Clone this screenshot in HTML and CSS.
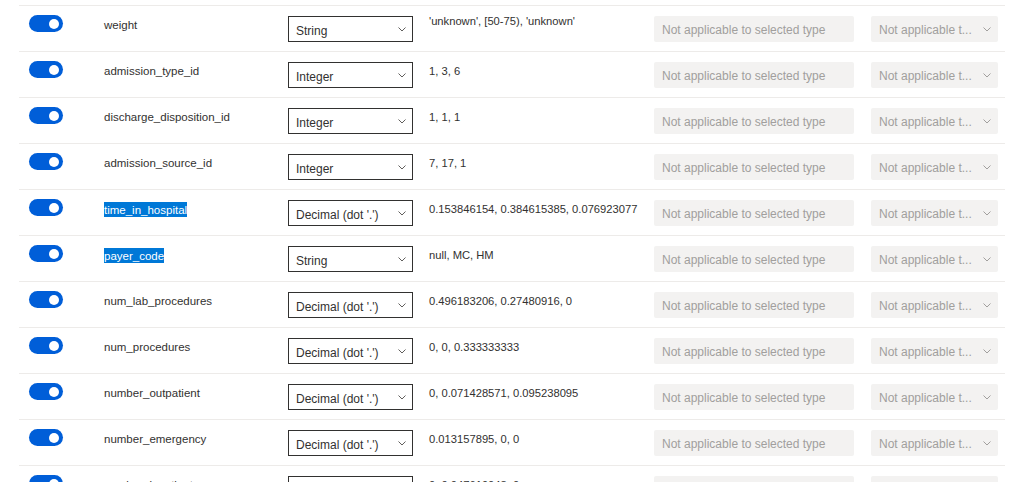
FILE: index.html
```html
<!DOCTYPE html>
<html lang="en">
<head>
<meta charset="utf-8">
<title>Column types</title>
<link rel="stylesheet" href="styles.css">
</head>
<body>
<div class="list">
  <div class="row">
    <div class="c-toggle"><span class="toggle"><span class="knob"></span></span></div>
    <div class="c-name">weight</div>
    <div class="c-type"><div class="dropdown"><span class="dd-text">String</span><svg class="chev" width="8" height="5" viewBox="0 0 8 5"><path d="M0.5 0.5 L4 4 L7.5 0.5"/></svg></div></div>
    <div class="c-sample c-sample-high">'unknown', [50-75), 'unknown'</div>
    <div class="c-format"><div class="field-disabled">Not applicable to selected type</div></div>
    <div class="c-opt"><div class="dropdown disabled"><span class="dd-text">Not applicable t...</span><svg class="chev" width="8" height="5" viewBox="0 0 8 5"><path d="M0.5 0.5 L4 4 L7.5 0.5"/></svg></div></div>
  </div>
  <div class="row">
    <div class="c-toggle"><span class="toggle"><span class="knob"></span></span></div>
    <div class="c-name">admission_type_id</div>
    <div class="c-type"><div class="dropdown"><span class="dd-text">Integer</span><svg class="chev" width="8" height="5" viewBox="0 0 8 5"><path d="M0.5 0.5 L4 4 L7.5 0.5"/></svg></div></div>
    <div class="c-sample">1, 3, 6</div>
    <div class="c-format"><div class="field-disabled">Not applicable to selected type</div></div>
    <div class="c-opt"><div class="dropdown disabled"><span class="dd-text">Not applicable t...</span><svg class="chev" width="8" height="5" viewBox="0 0 8 5"><path d="M0.5 0.5 L4 4 L7.5 0.5"/></svg></div></div>
  </div>
  <div class="row">
    <div class="c-toggle"><span class="toggle"><span class="knob"></span></span></div>
    <div class="c-name">discharge_disposition_id</div>
    <div class="c-type"><div class="dropdown"><span class="dd-text">Integer</span><svg class="chev" width="8" height="5" viewBox="0 0 8 5"><path d="M0.5 0.5 L4 4 L7.5 0.5"/></svg></div></div>
    <div class="c-sample">1, 1, 1</div>
    <div class="c-format"><div class="field-disabled">Not applicable to selected type</div></div>
    <div class="c-opt"><div class="dropdown disabled"><span class="dd-text">Not applicable t...</span><svg class="chev" width="8" height="5" viewBox="0 0 8 5"><path d="M0.5 0.5 L4 4 L7.5 0.5"/></svg></div></div>
  </div>
  <div class="row">
    <div class="c-toggle"><span class="toggle"><span class="knob"></span></span></div>
    <div class="c-name">admission_source_id</div>
    <div class="c-type"><div class="dropdown"><span class="dd-text">Integer</span><svg class="chev" width="8" height="5" viewBox="0 0 8 5"><path d="M0.5 0.5 L4 4 L7.5 0.5"/></svg></div></div>
    <div class="c-sample">7, 17, 1</div>
    <div class="c-format"><div class="field-disabled">Not applicable to selected type</div></div>
    <div class="c-opt"><div class="dropdown disabled"><span class="dd-text">Not applicable t...</span><svg class="chev" width="8" height="5" viewBox="0 0 8 5"><path d="M0.5 0.5 L4 4 L7.5 0.5"/></svg></div></div>
  </div>
  <div class="row">
    <div class="c-toggle"><span class="toggle"><span class="knob"></span></span></div>
    <div class="c-name"><span class="sel">time_in_hospital</span></div>
    <div class="c-type"><div class="dropdown"><span class="dd-text">Decimal (dot '.')</span><svg class="chev" width="8" height="5" viewBox="0 0 8 5"><path d="M0.5 0.5 L4 4 L7.5 0.5"/></svg></div></div>
    <div class="c-sample">0.153846154, 0.384615385, 0.076923077</div>
    <div class="c-format"><div class="field-disabled">Not applicable to selected type</div></div>
    <div class="c-opt"><div class="dropdown disabled"><span class="dd-text">Not applicable t...</span><svg class="chev" width="8" height="5" viewBox="0 0 8 5"><path d="M0.5 0.5 L4 4 L7.5 0.5"/></svg></div></div>
  </div>
  <div class="row">
    <div class="c-toggle"><span class="toggle"><span class="knob"></span></span></div>
    <div class="c-name"><span class="sel">payer_code</span></div>
    <div class="c-type"><div class="dropdown"><span class="dd-text">String</span><svg class="chev" width="8" height="5" viewBox="0 0 8 5"><path d="M0.5 0.5 L4 4 L7.5 0.5"/></svg></div></div>
    <div class="c-sample">null, MC, HM</div>
    <div class="c-format"><div class="field-disabled">Not applicable to selected type</div></div>
    <div class="c-opt"><div class="dropdown disabled"><span class="dd-text">Not applicable t...</span><svg class="chev" width="8" height="5" viewBox="0 0 8 5"><path d="M0.5 0.5 L4 4 L7.5 0.5"/></svg></div></div>
  </div>
  <div class="row">
    <div class="c-toggle"><span class="toggle"><span class="knob"></span></span></div>
    <div class="c-name">num_lab_procedures</div>
    <div class="c-type"><div class="dropdown"><span class="dd-text">Decimal (dot '.')</span><svg class="chev" width="8" height="5" viewBox="0 0 8 5"><path d="M0.5 0.5 L4 4 L7.5 0.5"/></svg></div></div>
    <div class="c-sample">0.496183206, 0.27480916, 0</div>
    <div class="c-format"><div class="field-disabled">Not applicable to selected type</div></div>
    <div class="c-opt"><div class="dropdown disabled"><span class="dd-text">Not applicable t...</span><svg class="chev" width="8" height="5" viewBox="0 0 8 5"><path d="M0.5 0.5 L4 4 L7.5 0.5"/></svg></div></div>
  </div>
  <div class="row">
    <div class="c-toggle"><span class="toggle"><span class="knob"></span></span></div>
    <div class="c-name">num_procedures</div>
    <div class="c-type"><div class="dropdown"><span class="dd-text">Decimal (dot '.')</span><svg class="chev" width="8" height="5" viewBox="0 0 8 5"><path d="M0.5 0.5 L4 4 L7.5 0.5"/></svg></div></div>
    <div class="c-sample">0, 0, 0.333333333</div>
    <div class="c-format"><div class="field-disabled">Not applicable to selected type</div></div>
    <div class="c-opt"><div class="dropdown disabled"><span class="dd-text">Not applicable t...</span><svg class="chev" width="8" height="5" viewBox="0 0 8 5"><path d="M0.5 0.5 L4 4 L7.5 0.5"/></svg></div></div>
  </div>
  <div class="row">
    <div class="c-toggle"><span class="toggle"><span class="knob"></span></span></div>
    <div class="c-name">number_outpatient</div>
    <div class="c-type"><div class="dropdown"><span class="dd-text">Decimal (dot '.')</span><svg class="chev" width="8" height="5" viewBox="0 0 8 5"><path d="M0.5 0.5 L4 4 L7.5 0.5"/></svg></div></div>
    <div class="c-sample">0, 0.071428571, 0.095238095</div>
    <div class="c-format"><div class="field-disabled">Not applicable to selected type</div></div>
    <div class="c-opt"><div class="dropdown disabled"><span class="dd-text">Not applicable t...</span><svg class="chev" width="8" height="5" viewBox="0 0 8 5"><path d="M0.5 0.5 L4 4 L7.5 0.5"/></svg></div></div>
  </div>
  <div class="row">
    <div class="c-toggle"><span class="toggle"><span class="knob"></span></span></div>
    <div class="c-name">number_emergency</div>
    <div class="c-type"><div class="dropdown"><span class="dd-text">Decimal (dot '.')</span><svg class="chev" width="8" height="5" viewBox="0 0 8 5"><path d="M0.5 0.5 L4 4 L7.5 0.5"/></svg></div></div>
    <div class="c-sample">0.013157895, 0, 0</div>
    <div class="c-format"><div class="field-disabled">Not applicable to selected type</div></div>
    <div class="c-opt"><div class="dropdown disabled"><span class="dd-text">Not applicable t...</span><svg class="chev" width="8" height="5" viewBox="0 0 8 5"><path d="M0.5 0.5 L4 4 L7.5 0.5"/></svg></div></div>
  </div>
  <div class="row">
    <div class="c-toggle"><span class="toggle"><span class="knob"></span></span></div>
    <div class="c-name">number_inpatient</div>
    <div class="c-type"><div class="dropdown"><span class="dd-text">Decimal (dot '.')</span><svg class="chev" width="8" height="5" viewBox="0 0 8 5"><path d="M0.5 0.5 L4 4 L7.5 0.5"/></svg></div></div>
    <div class="c-sample">0, 0.047619048, 0</div>
    <div class="c-format"><div class="field-disabled">Not applicable to selected type</div></div>
    <div class="c-opt"><div class="dropdown disabled"><span class="dd-text">Not applicable t...</span><svg class="chev" width="8" height="5" viewBox="0 0 8 5"><path d="M0.5 0.5 L4 4 L7.5 0.5"/></svg></div></div>
  </div>
</div>
</body>
</html>
```

FILE: styles.css
```css
* {
  box-sizing: border-box;
}

html,
body {
  margin: 0;
  background: #ffffff;
  overflow: hidden;
}

body {
  font-family: "Liberation Sans", Arial, sans-serif;
  font-size: 12px;
  color: #323130;
}

.list {
  padding: 5px 0 0 19px;
  width: 1005px;
}

.row {
  display: flex;
  align-items: flex-start;
  height: 46px;
  border-top: 1px solid #edebe9;
}

.c-toggle {
  width: 85px;
  padding: 9px 0 0 10px;
}

.toggle {
  display: flex;
  align-items: center;
  justify-content: flex-end;
  width: 34px;
  height: 17px;
  border-radius: 9px;
  background: #005ed8;
  padding-right: 4px;
}

.knob {
  width: 10px;
  height: 10px;
  border-radius: 50%;
  background: #ffffff;
}

.c-name {
  width: 184px;
  padding-top: 12px;
  font-size: 11.5px;
  line-height: 15px;
  white-space: nowrap;
}

.sel {
  display: inline-block;
  background: #0078d7;
  color: #ffffff;
  padding-top: 1px;
  line-height: 14px;
}

.c-type {
  width: 141px;
  padding-top: 10px;
}

.dropdown {
  display: flex;
  align-items: center;
  justify-content: space-between;
  width: 125px;
  height: 26px;
  border: 1px solid #323130;
  padding: 0 6px 0 7px;
  background: #ffffff;
  white-space: nowrap;
}

.dd-text {
  padding-top: 3px;
}

.chev {
  flex: none;
  margin-top: 1px;
}

.chev path {
  fill: none;
  stroke: #605e5c;
  stroke-width: 1;
}

.c-sample {
  width: 225px;
  padding-top: 12px;
  font-size: 11.2px;
  line-height: 15px;
  white-space: nowrap;
}

.c-sample-high {
  padding-top: 8px;
}

.c-format {
  width: 217px;
  padding-top: 10px;
}

.field-disabled {
  width: 200px;
  height: 26px;
  line-height: 24px;
  padding: 2px 0 0 8px;
  background: #f3f2f1;
  color: #a19f9d;
  border-radius: 2px;
  white-space: nowrap;
}

.c-opt {
  width: 127px;
  padding-top: 10px;
}

.dropdown.disabled {
  width: 127px;
  border: none;
  border-radius: 2px;
  background: #f3f2f1;
  color: #a19f9d;
  padding: 0 7px 0 8px;
}

.dropdown.disabled .dd-text {
  padding-top: 1px;
}

.dropdown.disabled .chev path {
  stroke: #a19f9d;
}
```
